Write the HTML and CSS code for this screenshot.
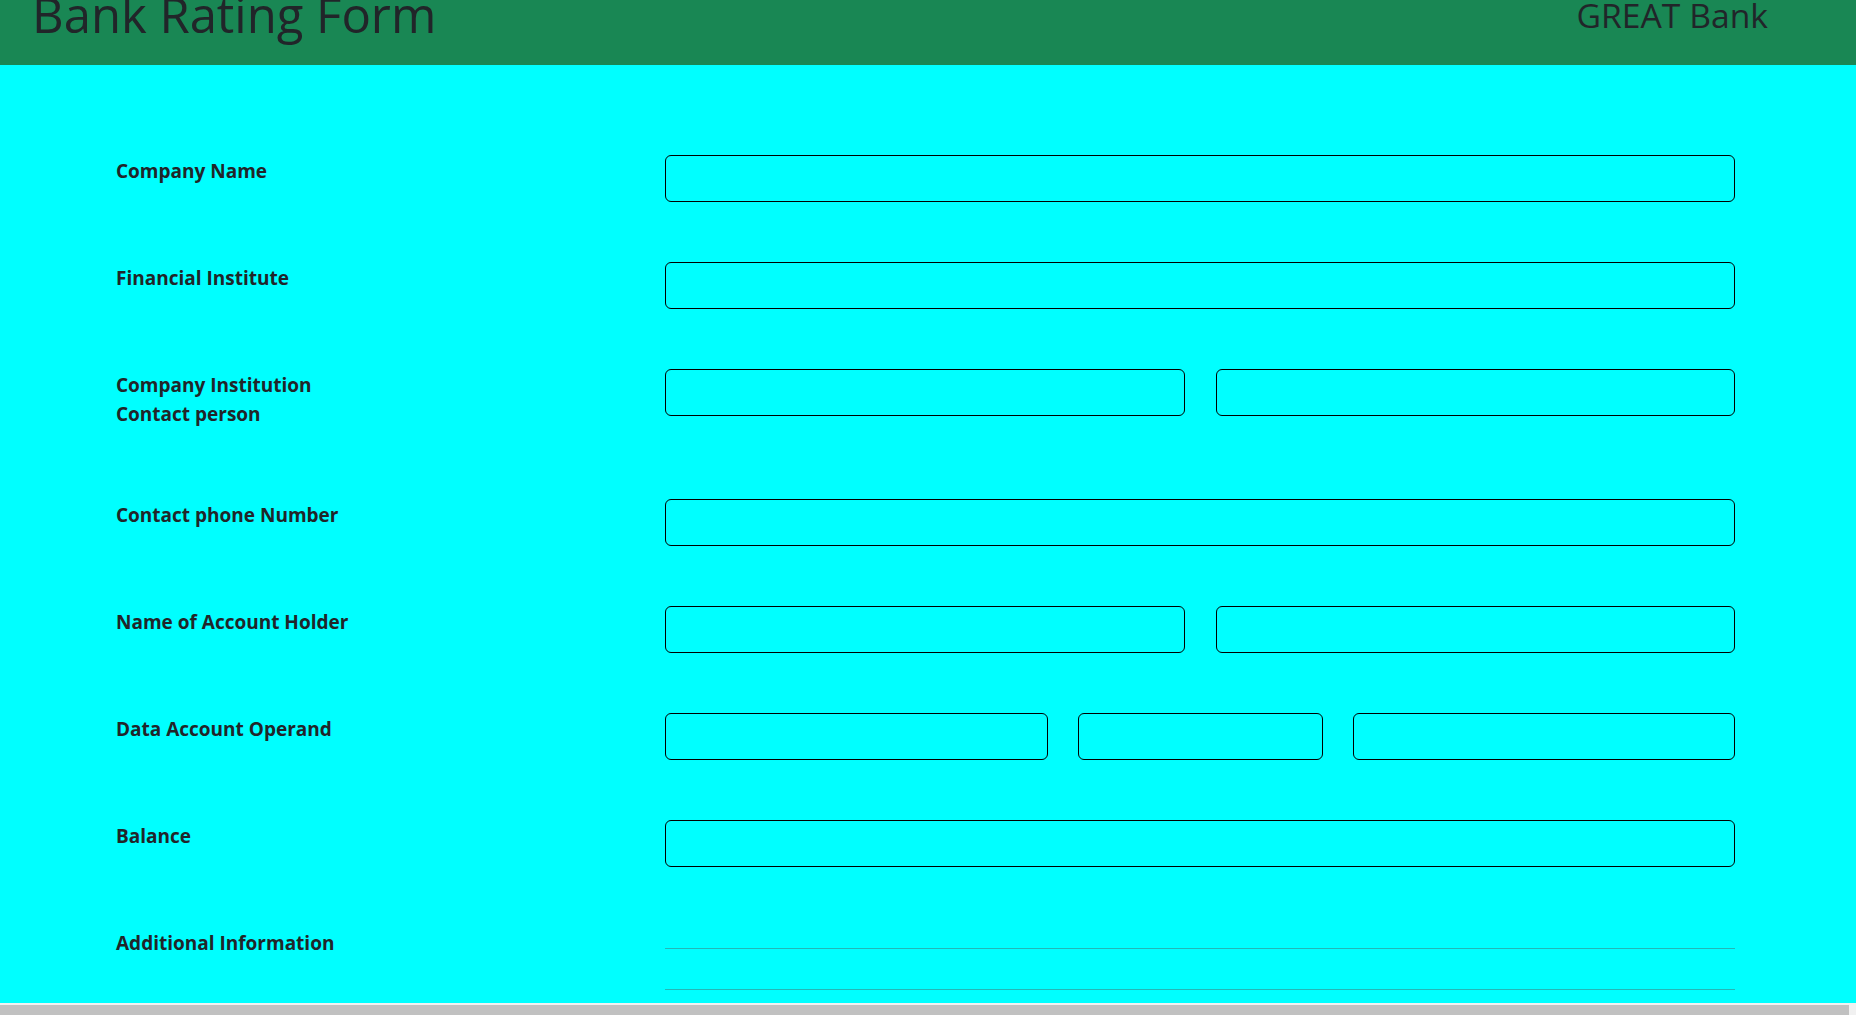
FILE: index.html
```html
<!DOCTYPE html>
<html lang="en">
<head>
<meta charset="utf-8">
<title>Bank Rating Form</title>
<link rel="stylesheet" href="styles.css">
</head>
<body>
<header class="topbar">
  <h1 class="title">Bank Rating Form</h1>
  <div class="brand">GREAT Bank</div>
</header>
<main class="form">
  <div class="row">
    <label class="label">Company Name</label>
    <div class="fields one"><div class="input"></div></div>
  </div>
  <div class="row">
    <label class="label">Financial Institute</label>
    <div class="fields one"><div class="input"></div></div>
  </div>
  <div class="row">
    <label class="label">Company Institution<br>Contact person</label>
    <div class="fields two"><div class="input"></div><div class="input"></div></div>
  </div>
  <div class="row">
    <label class="label">Contact phone Number</label>
    <div class="fields one"><div class="input"></div></div>
  </div>
  <div class="row">
    <label class="label">Name of Account Holder</label>
    <div class="fields two"><div class="input"></div><div class="input"></div></div>
  </div>
  <div class="row">
    <label class="label">Data Account Operand</label>
    <div class="fields three"><div class="input"></div><div class="input"></div><div class="input"></div></div>
  </div>
  <div class="row">
    <label class="label">Balance</label>
    <div class="fields one"><div class="input"></div></div>
  </div>
  <div class="row">
    <label class="label">Additional Information</label>
    <div class="fields one"><div class="textarea"></div></div>
  </div>
</main>
<div class="hscroll"><div class="hthumb"></div></div>
</body>
</html>
```
FILE: styles.css
```css
html, body {
  margin: 0;
  padding: 0;
  height: 100%;
  overflow: hidden;
}
body {
  background: #00ffff;
  color: #212529;
  font-family: "Open Sans", "Noto Sans", sans-serif;
}
.topbar {
  background: #198754;
  height: 65px;
  display: flex;
  justify-content: space-between;
  align-items: flex-start;
  padding: 0 88px 0 32px;
  overflow: hidden;
}
.title {
  margin: -15px 0 0 0;
  font-size: 49px;
  font-weight: 400;
  line-height: 1.2;
  letter-spacing: 0;
}
.brand {
  margin-top: -5px;
  font-size: 33.7px;
  line-height: 1.2;
}
.form {
  padding: 90px 121px 0 116px;
  display: flex;
  flex-direction: column;
  gap: 60px;
}
.row {
  display: flex;
  align-items: flex-start;
}
.label {
  width: 549px;
  flex: none;
  font-size: 19px;
  font-weight: 700;
  line-height: 29px;
  padding: 2px 0 10px 0;
}
.fields {
  flex: 1;
  display: grid;
  column-gap: 31px;
}
.fields.one { grid-template-columns: 1fr; }
.fields.two { grid-template-columns: 1fr 1fr; }
.fields.three { grid-template-columns: 383fr 244fr 382fr; column-gap: 30px; }
.input {
  height: 47px;
  box-sizing: border-box;
  border: 1px solid #000;
  border-radius: 6px;
}
.textarea {
  margin-top: 21px;
  height: 42px;
  box-sizing: border-box;
  border-top: 1px solid #22b8b8;
  border-bottom: 1px solid #22b8b8;
}
.hscroll {
  position: fixed;
  left: 0;
  right: 0;
  bottom: 0;
  height: 12px;
  background: #f1f1f1;
}
.hthumb {
  position: absolute;
  left: 0;
  top: 2px;
  width: 1849px;
  height: 10px;
  background: #c1c1c1;
}
```
